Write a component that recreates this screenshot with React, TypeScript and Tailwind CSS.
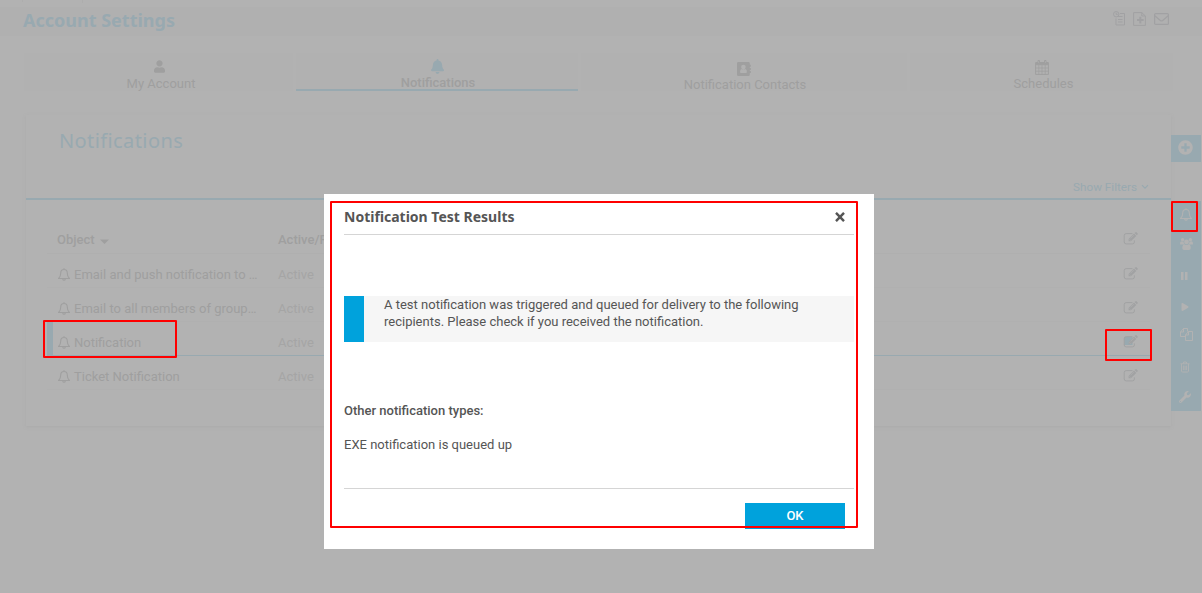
import React from "react";
import { FaUser, FaBell, FaPlay, FaWrench, FaPlusCircle } from "react-icons/fa";

type IconProps = { className?: string };

const BellIcon = ({ className }: IconProps) => (
  <svg width="12" height="13" viewBox="0 0 12 13" fill="none" stroke="currentColor" strokeWidth="1.100" className={className}>
    <path d="M6 .2v1M2.700 5.200Q2.700 1.500 6 1.500t3.300 3.700c0 3 .9 4.200 2.100 5.300H.6C1.800 9.400 2.700 8.200 2.700 5.200ZM4.700 10.800q.2 1.400 1.300 1.400t1.300-1.400" />
  </svg>
);

const EditIcon = ({ active }: { active?: boolean }) => (
  <svg width="16" height="14" viewBox="0 0 16 14" fill="none" className="shrink-0 text-[#a1a2a3]">
    {active && <rect x="1" y="2" width="8.500" height="8" fill="#98a9b0" />}
    <path d="M9.500 1.600H3.200A2 2 0 0 0 1.200 3.600v6.300a2 2 0 0 0 2 2h6.200a2 2 0 0 0 2-2V8.400" stroke="currentColor" />
    <path d="M5.600 9.300V7L11 1.600l2.300 2.300-5.400 5.400zM11.600 1l1-.8q.5-.3.9 0l1.200 1.200q.4.400 0 .9l-.9.9z" fill="currentColor" />
    <path d="m6.300 7.400 1.200 1.200M7.500 6.400l3.300-3.300" stroke="#b2b2b2" strokeWidth=".6" />
  </svg>
);

const UsersIcon = ({ className }: IconProps) => (
  <svg width="13" height="12" viewBox="0 0 13 12" fill="currentColor" className={className}>
    <circle cx="2.600" cy="1.800" r="1.700" /><circle cx="10.400" cy="1.800" r="1.700" /><circle cx="6.500" cy="3.900" r="2.400" />
    <path d="M0 5.900Q0 3.200 1.300 3.300q1 .6 2.300.2Q3.500 5 4.300 5.900L2.800 6.600H1Q0 6.600 0 5.900ZM13 5.900q0-2.700-1.300-2.600-1 .6-2.300.2.100 1.500-.7 2.400l1.500.7H12q1 0 1-.7ZM4.300 6.200q2.200 1.500 4.400 0 2 .3 2 4 0 1.700-1.700 1.700H4q-1.700 0-1.700-1.700 0-3.700 2-4Z" />
  </svg>
);

const PauseIcon = ({ className }: IconProps) => (
  <svg width="7" height="8" viewBox="0 0 7 8" fill="currentColor" className={className}>
    <path d="M0 0h2.500v8H0zM4 0h2.500v8H4z" />
  </svg>
);

const CopyIcon = ({ className }: IconProps) => (
  <svg width="13" height="13" viewBox="0 0 13 13" fill="none" stroke="currentColor" className={className}>
    <path d="M5.500 8.500h-5V4l3-3.500h4v3M.5 4h3V.5M5.500 7l3-3.500h4v9h-7zM5.500 7h3V3.500" />
  </svg>
);

const TrashIcon = ({ className }: IconProps) => (
  <svg width="10" height="12" viewBox="0 0 11 12" fill="none" stroke="currentColor" className={className}>
    <path d="M.5 2.500h10M3.500 2.500l.5-2h3l.5 2M1.700 2.500v8q0 1 1 1h5.600q1 0 1-1v-8M3.700 4.500v5M5.500 4.500v5M7.300 4.500v5" />
  </svg>
);

const CalendarIcon = () => (
  <svg width="14" height="15" viewBox="0 0 14 15" fill="none" stroke="currentColor" className="shrink-0">
    <path d="M.6 2.700h12.800v11.700H.6z" />
    <path d="M.6 8h12.800M.6 11.200h12.800M3.800 5v9.400M7 5v9.400M10.200 5v9.400" strokeWidth=".7" />
    <path d="M1 2.700h12v2H1z" fill="currentColor" />
    <path d="M3 .5h1.500v3H3zM9.500.5H11v3H9.500z" fill="#b1b1b1" />
  </svg>
);

const AddressIcon = () => (
  <svg width="14" height="14" viewBox="0 0 14 14" fill="currentColor" className="shrink-0">
    <path fillRule="evenodd" d="M1.300 0h10.200q1.300 0 1.300 1.300v1.500h1v2h-1v1.100h1v2h-1V9h1v2h-1v1.700q0 1.300-1.300 1.300H1.300Q0 14 0 12.700V1.300Q0 0 1.300 0ZM6.400 2.800a2.300 2.300 0 1 0 0 4.600 2.300 2.300 0 0 0 0-4.600ZM4.500 6.900Q3 7.200 3 9.800q0 1.200 1 1.200h4.900q1 0 1-1.200 0-2.600-1.500-2.900-1.900 1.300-3.900 0Z" />
  </svg>
);

const HistoryIcon = () => (
  <svg width="12" height="15" viewBox="0 0 12 15" fill="none" stroke="currentColor">
    <circle cx="3.200" cy="3.200" r="2.700" /><path d="M3.200 1.700v1.700h1.500M7 2.500h4.500v11.500H3V7.500M5 5.500h4.500M5 8.500h4.500M5 11h4.500" />
  </svg>
);

const FilePlusIcon = () => (
  <svg width="13" height="14" viewBox="0 0 13 14" fill="none" stroke="currentColor">
    <path d="M.6.6h8.200l3.600 3.400v9.400H.6zM8.800.6V4h3.600" /><path d="M7.300 4.800v6.600M4 8.100h6.600" strokeWidth="2" />
  </svg>
);

const MailIcon = () => (
  <svg width="15" height="12" viewBox="0 0 15 12" fill="none" stroke="currentColor" strokeWidth="1.200">
    <rect x=".6" y=".6" width="13.800" height="10.800" rx="1" /><path d="m.8 2.800 5.500 4.600q1.200.8 2.400 0l5.500-4.600" />
  </svg>
);

const rows = ["Email and push notification to …", "Email to all members of group…", "Notification", "Ticket Notification"];

export default function App() {
  return (
    <div className="relative h-[593px] w-[1202px] overflow-hidden bg-[#b2b2b2] font-['Roboto',sans-serif] text-[13px] text-[#9f9f9f]">
      <div className="flex h-[7px] gap-[59px] pl-[22px]">
        <i className="h-[2px] w-px bg-[#adadad]" />
        <i className="h-[3px] w-px bg-[#adadad]" />
      </div>
      <header className="flex h-[29px] items-start justify-between bg-[#b0b0b0] pr-[33px] pl-[23px]">
        <h1 className="font-['Noto_Sans',sans-serif] text-[18px] leading-[26px] font-bold text-[#98a9b0]">Account Settings</h1>
        <div className="flex items-center gap-[8px] pt-[4px] text-[#a1a1a3]">
          <HistoryIcon /><FilePlusIcon /><MailIcon />
        </div>
      </header>

      <nav className="mt-[17px] ml-[24px] flex h-[38px] w-[1149px] gap-[3px]">
        <div className="flex w-[269px] flex-col items-center bg-[#b1b1b1] pt-[7px]">
          <FaUser className="ml-px h-[13px] w-[11px] shrink-0" />
          <span className="mt-[3px] ml-[5px] leading-[15px]">My Account</span>
        </div>
        <div className="flex w-[282px] flex-col items-center border-b-2 border-[#98a9b0] bg-[#b1b1b1] pt-[6px]">
          <FaBell className="h-[15px] w-[13px] shrink-0 text-[#98a9b0]" />
          <span className="mt-[1px] ml-[2px] leading-[15px] font-medium">Notifications</span>
        </div>
        <div className="flex w-[326px] flex-col items-center bg-[#b1b1b1] pt-[9px] pr-px">
          <AddressIcon />
          <span className="mt-[1px] ml-[3px] leading-[15px]">Notification Contacts</span>
        </div>
        <div className="flex w-[263px] flex-col items-center bg-[#b1b1b1] pt-[7px]">
          <CalendarIcon />
          <span className="mt-[1px] ml-[4px] leading-[15px]">Schedules</span>
        </div>
      </nav>

      <main className="mt-[24px] ml-[26px] flex w-[1175px] items-start">
        <section className="flex h-[311px] w-[1145px] flex-col bg-[#b2b2b2] shadow-[0_1px_3px_#aaaaaa]">
          <div className="flex h-[85px] justify-between border-b-2 border-[#98a9b0] pr-[22px] pl-[33px] text-[#98a9b0]">
            <h2 className="mt-[11px] font-['Noto_Sans',sans-serif] text-[20px] leading-[30px] tracking-[0.4px]">Notifications</h2>
            <div className="flex items-center gap-[4px] self-end pb-[4px] text-[11.700px] leading-[14px]">
              Show Filters
              <svg width="8" height="6" viewBox="0 0 8 6" fill="none" stroke="currentColor" strokeWidth="1.200"><path d="m1 1.200 3 3 3-3" /></svg>
            </div>
          </div>
          <div className="mx-[21px] mt-[26px] flex h-[28px] items-center border-b border-[#afafaf] pl-[10px] font-medium">
            <div className="flex w-[221px] items-center gap-[5px]">
              Object
              <svg width="9" height="5" viewBox="0 0 9 5" fill="currentColor" className="mt-[4px]"><path d="M0 .5h9L4.500 5z" /></svg>
            </div>
            <div className="flex-1">Active/Paused</div>
            <div className="mr-[11px] pb-[2px]"><EditIcon /></div>
          </div>
          <div className="flex flex-col">
            {rows.map((label, i) => (
              <div key={label} className={i === 2 ? "mx-[21px] flex h-[34px] items-stretch border-b border-[#98a9b0] pr-[11px]" : "mx-[21px] flex h-[34px] items-stretch border-b border-[#b0b0b0] pr-[11px]"}>
                <span className={i === 2 ? "w-[6px] bg-[#98a9b0]" : "w-[6px]"} />
                <div className="flex flex-1 items-center pt-[8px]">
                  <BellIcon className="ml-[5px]" />
                  <span className="ml-[4px] w-[204px] whitespace-nowrap">{label}</span>
                  <span className="flex-1 text-[#a5a5a5]">Active</span>
                  <div className="pb-[1px]"><EditIcon active={i === 2} /></div>
                </div>
              </div>
            ))}
          </div>
        </section>
        <aside className="mt-[20px] flex w-[30px] flex-col gap-[39px] text-[#b2b2b2]">
          <div className="flex h-[27px] items-center bg-[#98a9b0] pb-[2px] pl-[7px]"><FaPlusCircle className="size-[15px]" /></div>
          <div className="flex h-[210px] flex-col items-center bg-[#98a9b0] pt-[7px]">
            <BellIcon />
            <UsersIcon className="mt-[17px]" />
            <PauseIcon className="mt-[22px] mr-[3px]" />
            <FaPlay className="mt-[23px] mr-[2px] h-[8px] w-[8px]" />
            <CopyIcon className="mt-[17px]" />
            <TrashIcon className="mt-[20px] mr-[2px]" />
            <FaWrench className="mt-[18px] mr-[2px] size-[12px]" />
          </div>
        </aside>
      </main>

      <div role="dialog" className="absolute top-[194px] left-[324px] flex h-[355px] w-[550px] flex-col bg-white pr-[20px] pl-[20px] text-[#555555]">
        <div className="flex h-[41px] items-center justify-between border-b border-[#d5d5d5] pt-[6px] pr-[9px]">
          <h3 className="pb-[2px] font-['Noto_Sans',sans-serif] text-[14px] font-bold">Notification Test Results</h3>
          <svg width="10" height="10" viewBox="0 0 10 10" stroke="currentColor" strokeWidth="2.400"><path d="m1 .8 8 8.400M9 .8 1 9.200" /></svg>
        </div>
        <div className="mt-[61px] flex h-[46px] border-l-[20px] border-[#00a2dc] bg-[#f6f6f6] pl-[20px] leading-[17px]">
          <p className="w-[440px]">A test notification was triggered and queued for delivery to the following recipients. Please check if you received the notification.</p>
        </div>
        <p className="mt-[60px] leading-[17px] font-medium">Other notification types:</p>
        <p className="mt-[17px] leading-[17px]">EXE notification is queued up</p>
        <div className="mt-[35px] flex justify-end border-t border-[#d5d5d5] pt-[14px] pr-[9px]">
          <button className="h-[26px] w-[100px] bg-[#00a2dc] text-[13px] font-medium text-white">OK</button>
        </div>
      </div>

      <div className="absolute top-[201px] left-[330px] h-[327px] w-[528px] rounded-[1px] border-2 border-[#ff0000]" />
      <div className="absolute top-[320px] left-[43px] h-[38px] w-[134px] rounded-[1px] border-2 border-[#ff0000]" />
      <div className="absolute top-[329px] left-[1105px] h-[32px] w-[47px] rounded-[1px] border-2 border-[#ff0000]" />
      <div className="absolute top-[201px] left-[1171px] h-[31px] w-[27px] rounded-[1px] border-2 border-[#ff0000]" />
    </div>
  );
}
